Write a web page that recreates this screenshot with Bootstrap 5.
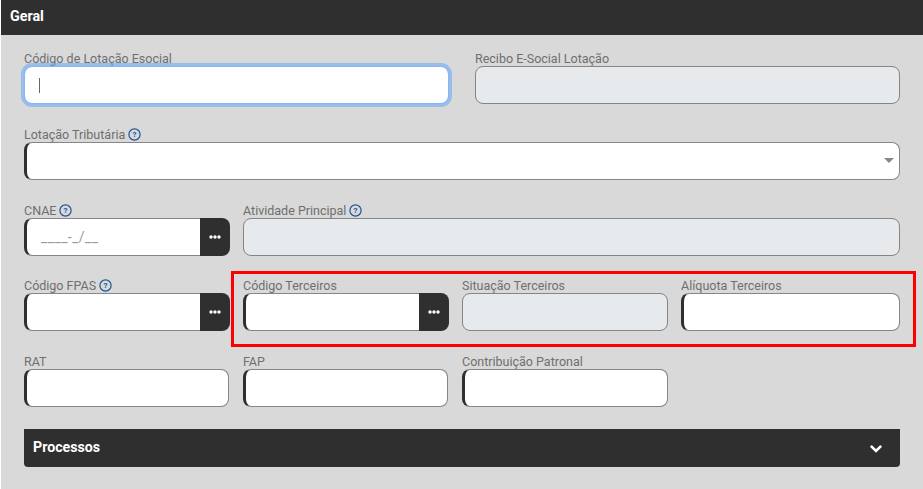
<!DOCTYPE html>
<html lang="pt-BR">
<head>
<meta charset="utf-8">
<title>Geral</title>
<link href="https://cdn.jsdelivr.net/npm/bootstrap@5.3.0/dist/css/bootstrap.min.css" rel="stylesheet">
<style>
html,body{height:489px;overflow:hidden;background:#fff;}
body{font-family:Roboto,"Liberation Sans",sans-serif;padding-left:1px;}
.shell{background:#d9d9d9;height:489px;position:relative;}
.top-bar{background:#2f2f2f;color:#fff;height:35px;font-size:14.3px;font-weight:700;padding-left:9px;line-height:32px;}
.form-body{padding:16px 23px 0 23px;}
.line{display:grid;margin-bottom:22.75px;}
.line-last{margin-bottom:22px;}
.line-half{grid-template-columns:425px 425px;column-gap:26px;}
.line-full{grid-template-columns:876px;}
.line-cnae{grid-template-columns:206px 657px;column-gap:13px;}
.line-four{grid-template-columns:206px 206px 206px 219px;column-gap:13px;}
.line-rat{grid-template-columns:205px 205px 206px;column-gap:14px;}
.fld-label{display:flex;align-items:center;gap:3px;font-size:12.5px;line-height:15px;height:15px;color:#6f6f6f;margin:0;white-space:nowrap;}
.help-dot{width:13px;height:13px;flex:none;}
.fld{height:38px;border:1px solid #868686;border-left:3px solid #2f2f2f;border-radius:8px;background-color:#fff;padding:0 14px;font-size:14px;box-shadow:none;font-family:inherit;}
.fld:disabled{background-color:#e7eaed;border-left:1px solid #868686;opacity:1;}
.fld-focus{border:1px solid #86b7fe;box-shadow:0 0 0 3px rgba(100,165,245,.55);}
.fld-wrap{position:relative;}
.caret-mark{position:absolute;left:15px;top:12px;width:1px;height:15px;background:#666;}
.fld-select{background-image:url("data:image/svg+xml,%3Csvg xmlns='http://www.w3.org/2000/svg' width='10' height='5'%3E%3Cpath d='M0 0h10L5 5z' fill='%23888'/%3E%3C/svg%3E");background-repeat:no-repeat;background-position:right 5px center;background-size:10px 5px;}
.fld-mask{padding-left:14px;letter-spacing:.4px;}
.fld-mask::placeholder{color:#9a9a9a;opacity:1;}
.fld-grp .fld{border-radius:8px 0 0 8px;border-right:0;min-width:0;}
.dots-btn{width:30px;height:38px;background:#2f2f2f;border:0;border-radius:0 8px 8px 0;padding:0;display:flex;align-items:center;justify-content:center;flex:none;}
.fold-bar{height:38px;background:#2f2f2f;color:#fff;border-radius:0 0 4px 4px;font-size:14.2px;font-weight:700;padding:0 17px 0 9px;width:876px;}
.red-frame{position:absolute;left:230px;top:271px;width:685px;height:76px;border:3px solid #f00;pointer-events:none;}
</style>
</head>
<body>
<div class="shell">
  <div class="top-bar">Geral</div>
  <div class="form-body">
    <div class="line line-half">
      <div>
        <label class="fld-label" for="f1">Código de Lotação Esocial</label>
        <div class="fld-wrap">
          <input id="f1" type="text" class="form-control fld fld-focus">
          <span class="caret-mark"></span>
        </div>
      </div>
      <div>
        <label class="fld-label" for="f2">Recibo E-Social Lotação</label>
        <input id="f2" type="text" class="form-control fld" disabled>
      </div>
    </div>

    <div class="line line-full">
      <div>
        <label class="fld-label" for="f3">Lotação Tributária
          <svg class="help-dot" viewBox="0 0 13 13"><circle cx="6.5" cy="6.5" r="5.6" fill="none" stroke="#1c5596" stroke-width="1.2"/><text x="6.5" y="9.4" text-anchor="middle" font-size="8" font-weight="700" fill="#1c5596" font-family="Roboto,sans-serif">?</text></svg>
        </label>
        <select id="f3" class="form-select fld fld-select"><option></option></select>
      </div>
    </div>

    <div class="line line-cnae">
      <div>
        <label class="fld-label" for="f4">CNAE
          <svg class="help-dot" viewBox="0 0 13 13"><circle cx="6.5" cy="6.5" r="5.6" fill="none" stroke="#1c5596" stroke-width="1.2"/><text x="6.5" y="9.4" text-anchor="middle" font-size="8" font-weight="700" fill="#1c5596" font-family="Roboto,sans-serif">?</text></svg>
        </label>
        <div class="d-flex fld-grp">
          <input id="f4" type="text" class="form-control fld fld-mask" placeholder="____-_/__">
          <button type="button" class="dots-btn" aria-label="Buscar"><svg width="12" height="4" viewBox="0 0 12 4"><circle cx="2" cy="2" r="1.7" fill="#fff"/><circle cx="6" cy="2" r="1.7" fill="#fff"/><circle cx="10" cy="2" r="1.7" fill="#fff"/></svg></button>
        </div>
      </div>
      <div>
        <label class="fld-label" for="f5">Atividade Principal
          <svg class="help-dot" viewBox="0 0 13 13"><circle cx="6.5" cy="6.5" r="5.6" fill="none" stroke="#1c5596" stroke-width="1.2"/><text x="6.5" y="9.4" text-anchor="middle" font-size="8" font-weight="700" fill="#1c5596" font-family="Roboto,sans-serif">?</text></svg>
        </label>
        <input id="f5" type="text" class="form-control fld" disabled>
      </div>
    </div>

    <div class="line line-four">
      <div>
        <label class="fld-label" for="f6">Código FPAS
          <svg class="help-dot" viewBox="0 0 13 13"><circle cx="6.5" cy="6.5" r="5.6" fill="none" stroke="#1c5596" stroke-width="1.2"/><text x="6.5" y="9.4" text-anchor="middle" font-size="8" font-weight="700" fill="#1c5596" font-family="Roboto,sans-serif">?</text></svg>
        </label>
        <div class="d-flex fld-grp">
          <input id="f6" type="text" class="form-control fld">
          <button type="button" class="dots-btn" aria-label="Buscar"><svg width="12" height="4" viewBox="0 0 12 4"><circle cx="2" cy="2" r="1.7" fill="#fff"/><circle cx="6" cy="2" r="1.7" fill="#fff"/><circle cx="10" cy="2" r="1.7" fill="#fff"/></svg></button>
        </div>
      </div>
      <div>
        <label class="fld-label" for="f7">Código Terceiros</label>
        <div class="d-flex fld-grp">
          <input id="f7" type="text" class="form-control fld">
          <button type="button" class="dots-btn" aria-label="Buscar"><svg width="12" height="4" viewBox="0 0 12 4"><circle cx="2" cy="2" r="1.7" fill="#fff"/><circle cx="6" cy="2" r="1.7" fill="#fff"/><circle cx="10" cy="2" r="1.7" fill="#fff"/></svg></button>
        </div>
      </div>
      <div>
        <label class="fld-label" for="f8">Situação Terceiros</label>
        <input id="f8" type="text" class="form-control fld" disabled>
      </div>
      <div>
        <label class="fld-label" for="f9">Alíquota Terceiros</label>
        <input id="f9" type="text" class="form-control fld">
      </div>
    </div>

    <div class="line line-rat line-last">
      <div>
        <label class="fld-label" for="f10">RAT</label>
        <input id="f10" type="text" class="form-control fld">
      </div>
      <div>
        <label class="fld-label" for="f11">FAP</label>
        <input id="f11" type="text" class="form-control fld">
      </div>
      <div>
        <label class="fld-label" for="f12">Contribuição Patronal</label>
        <input id="f12" type="text" class="form-control fld">
      </div>
    </div>

    <div class="fold-bar d-flex align-items-center justify-content-between">
      <span>Processos</span>
      <svg width="14" height="9" viewBox="0 0 14 9"><path d="M1.8 1.8 7 7l5.2-5.2" fill="none" stroke="#fff" stroke-width="2.6" stroke-linejoin="miter"/></svg>
    </div>
  </div>
  <div class="red-frame"></div>
</div>
<script src="https://cdn.jsdelivr.net/npm/bootstrap@5.3.0/dist/js/bootstrap.bundle.min.js"></script>
</body>
</html>
